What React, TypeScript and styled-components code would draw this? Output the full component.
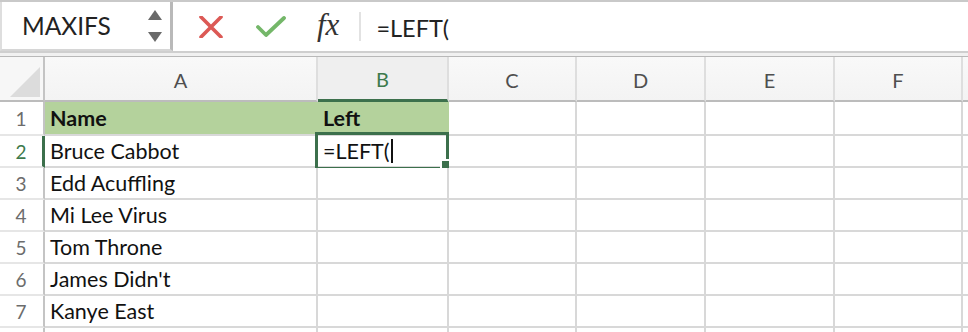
import styled, { createGlobalStyle } from "styled-components";

const GlobalStyle = createGlobalStyle`
  body {
    margin: 0;
    background: #ffffff;
    font-family: Lato, "Open Sans", sans-serif;
  }
`;

const GREEN = "#3c704c";
const FILL = "#b4d29c";

const Page = styled.div`
  width: 968px;
  height: 332px;
  overflow: hidden;
  background: #ffffff;
`;

const FormulaBar = styled.div`
  display: flex;
  height: 49px;
  border-top: 2px solid #c9c9c9;
  border-bottom: 2px solid #cfcfcf;
  background: #ffffff;
`;

const NameBox = styled.div`
  width: 140px;
  display: flex;
  align-items: center;
  justify-content: space-between;
  padding: 0 8px 0 20px;
  border-left: 2px solid #dedede;
  border-right: 3px solid #b9b9b9;
  border-bottom: 2px solid #d6d6d6;
  font-size: 24.5px;
  color: #222222;
`;

const Spinner = styled.div`
  display: flex;
  flex-direction: column;
  gap: 12px;
  margin-top: 1px;
  svg {
    display: block;
  }
`;

const Actions = styled.div`
  display: flex;
  align-items: center;
  flex: 1;
  padding-left: 26px;
`;

const ActionIcon = styled.span<{ $gap: number }>`
  display: flex;
  align-items: center;
  margin-right: ${(p) => p.$gap}px;
`;

const Fx = styled.i`
  font-family: "Liberation Serif", serif;
  font-size: 31px;
  line-height: 1;
  color: #333333;
  margin-right: 20px;
  margin-bottom: 4px;
`;

const Separator = styled.span`
  width: 2px;
  height: 29px;
  background: #e2e2e2;
  margin-right: 15px;
`;

const FormulaText = styled.span`
  font-size: 23.5px;
  color: #222222;
  padding-top: 2px;
`;

const Gutter = styled.div`
  height: 3px;
  background: #f1f1f1;
  border-bottom: 1px solid #b8b8b8;
`;

const Sheet = styled.div`
  display: grid;
  grid-template-columns: 45px 273px 131px 128px 129px 129px 128px 1fr;
  grid-template-rows: 45px 34px repeat(7, 32px);
`;

const Corner = styled.div`
  background: #f7f7f7;
  border-right: 2px solid #c4c4c4;
  border-bottom: 2px solid #bcbcbc;
  svg {
    display: block;
    margin: 10px 0 0 10px;
  }
`;

const ColHeader = styled.div<{ $active?: boolean }>`
  display: flex;
  align-items: center;
  justify-content: center;
  padding-top: 2px;
  font-size: 20px;
  color: ${(p) => (p.$active ? "#3d7a4c" : "#4f4f4f")};
  background: ${(p) =>
    p.$active ? "#efefef" : "linear-gradient(#f9f9f9, #f3f3f3)"};
  border-right: 2px solid #dedede;
  border-bottom: ${(p) =>
    p.$active ? `4px solid ${GREEN}` : "2px solid #bcbcbc"};
  margin-bottom: ${(p) => (p.$active ? "-1px" : "0")};
`;

const RowHeader = styled.div<{ $active?: boolean }>`
  display: flex;
  align-items: center;
  justify-content: center;
  font-size: 19px;
  color: ${(p) => (p.$active ? "#3d7a4c" : "#6c6c6c")};
  background: #ffffff;
  border-right: ${(p) =>
    p.$active ? `3px solid ${GREEN}` : "2px solid #c4c4c4"};
  border-bottom: 2px solid #e6e6e6;
  padding-right: ${(p) => (p.$active ? "0" : "1px")};
`;

const Cell = styled.div<{ $fill?: boolean; $bold?: boolean }>`
  position: relative;
  display: flex;
  align-items: center;
  padding-left: 5px;
  font-size: 21.5px;
  font-weight: ${(p) => (p.$bold ? 700 : 400)};
  color: #111111;
  white-space: nowrap;
  background: ${(p) => (p.$fill ? FILL : "#ffffff")};
  border-right: 2px solid ${(p) => (p.$fill ? FILL : "#d8d8d8")};
  border-bottom: 2px solid #d8d8d8;
`;

const Selection = styled.div`
  position: absolute;
  left: -3px;
  top: -4px;
  width: 134px;
  height: 38px;
  box-sizing: border-box;
  border: 3px solid ${GREEN};
  pointer-events: none;
`;

const FillHandle = styled.div`
  position: absolute;
  left: 124px;
  top: 25px;
  width: 10px;
  height: 10px;
  background: ${GREEN};
  box-shadow: 0 0 0 2px #ffffff;
`;

const Caret = styled.span`
  display: inline-block;
  width: 2px;
  height: 24px;
  margin-left: 1px;
  background: #111111;
`;

const columns = ["A", "B", "C", "D", "E", "F", ""];

const names = [
  "Bruce Cabbot",
  "Edd Acuffling",
  "Mi Lee Virus",
  "Tom Throne",
  "James Didn't",
  "Kanye East",
  "",
];

const App: React.FC<{}> = () => {
  return (
    <Page>
      <GlobalStyle />
      <FormulaBar>
        <NameBox>
          <span>MAXIFS</span>
          <Spinner>
            <svg width="14" height="10" viewBox="0 0 14 10">
              <path d="M7 0 L14 10 L0 10 Z" fill="#6a6a6a" />
            </svg>
            <svg width="14" height="10" viewBox="0 0 14 10">
              <path d="M0 0 L14 0 L7 10 Z" fill="#6a6a6a" />
            </svg>
          </Spinner>
        </NameBox>
        <Actions>
          <ActionIcon $gap={33}>
            <svg width="24" height="22" viewBox="0 0 24 22">
              <path
                d="M2 1 L22 21 M22 1 L2 21"
                stroke="#dc5955"
                strokeWidth="3.6"
                strokeLinecap="round"
              />
            </svg>
          </ActionIcon>
          <ActionIcon $gap={31}>
            <svg width="30" height="22" viewBox="0 0 30 22">
              <path
                d="M2 11 L10 19 L28 2"
                stroke="#74b769"
                strokeWidth="3.8"
                strokeLinecap="round"
                strokeLinejoin="round"
                fill="none"
              />
            </svg>
          </ActionIcon>
          <Fx>fx</Fx>
          <Separator />
          <FormulaText>=LEFT(</FormulaText>
        </Actions>
      </FormulaBar>
      <Gutter />
      <Sheet>
        <Corner>
          <svg width="30" height="30" viewBox="0 0 30 30">
            <path d="M30 0 L30 30 L0 30 Z" fill="#dcdcdc" />
          </svg>
        </Corner>
        {columns.map((c) => (
          <ColHeader key={c || "end"} $active={c === "B"}>
            {c}
          </ColHeader>
        ))}

        <RowHeader>1</RowHeader>
        <Cell $fill $bold>
          Name
        </Cell>
        <Cell $fill $bold>
          Left
        </Cell>
        {columns.slice(2).map((c) => (
          <Cell key={c || "end"} />
        ))}

        {names.map((name, i) => (
          <>
            <RowHeader key={`h${i}`} $active={i === 0}>
              {name ? i + 2 : ""}
            </RowHeader>
            <Cell key={`a${i}`}>{name}</Cell>
            <Cell key={`b${i}`}>
              {i === 0 && (
                <>
                  =LEFT(
                  <Caret />
                  <Selection />
                  <FillHandle />
                </>
              )}
            </Cell>
            {columns.slice(2).map((c) => (
              <Cell key={`${c || "end"}${i}`} />
            ))}
          </>
        ))}
      </Sheet>
    </Page>
  );
};

export default App;
